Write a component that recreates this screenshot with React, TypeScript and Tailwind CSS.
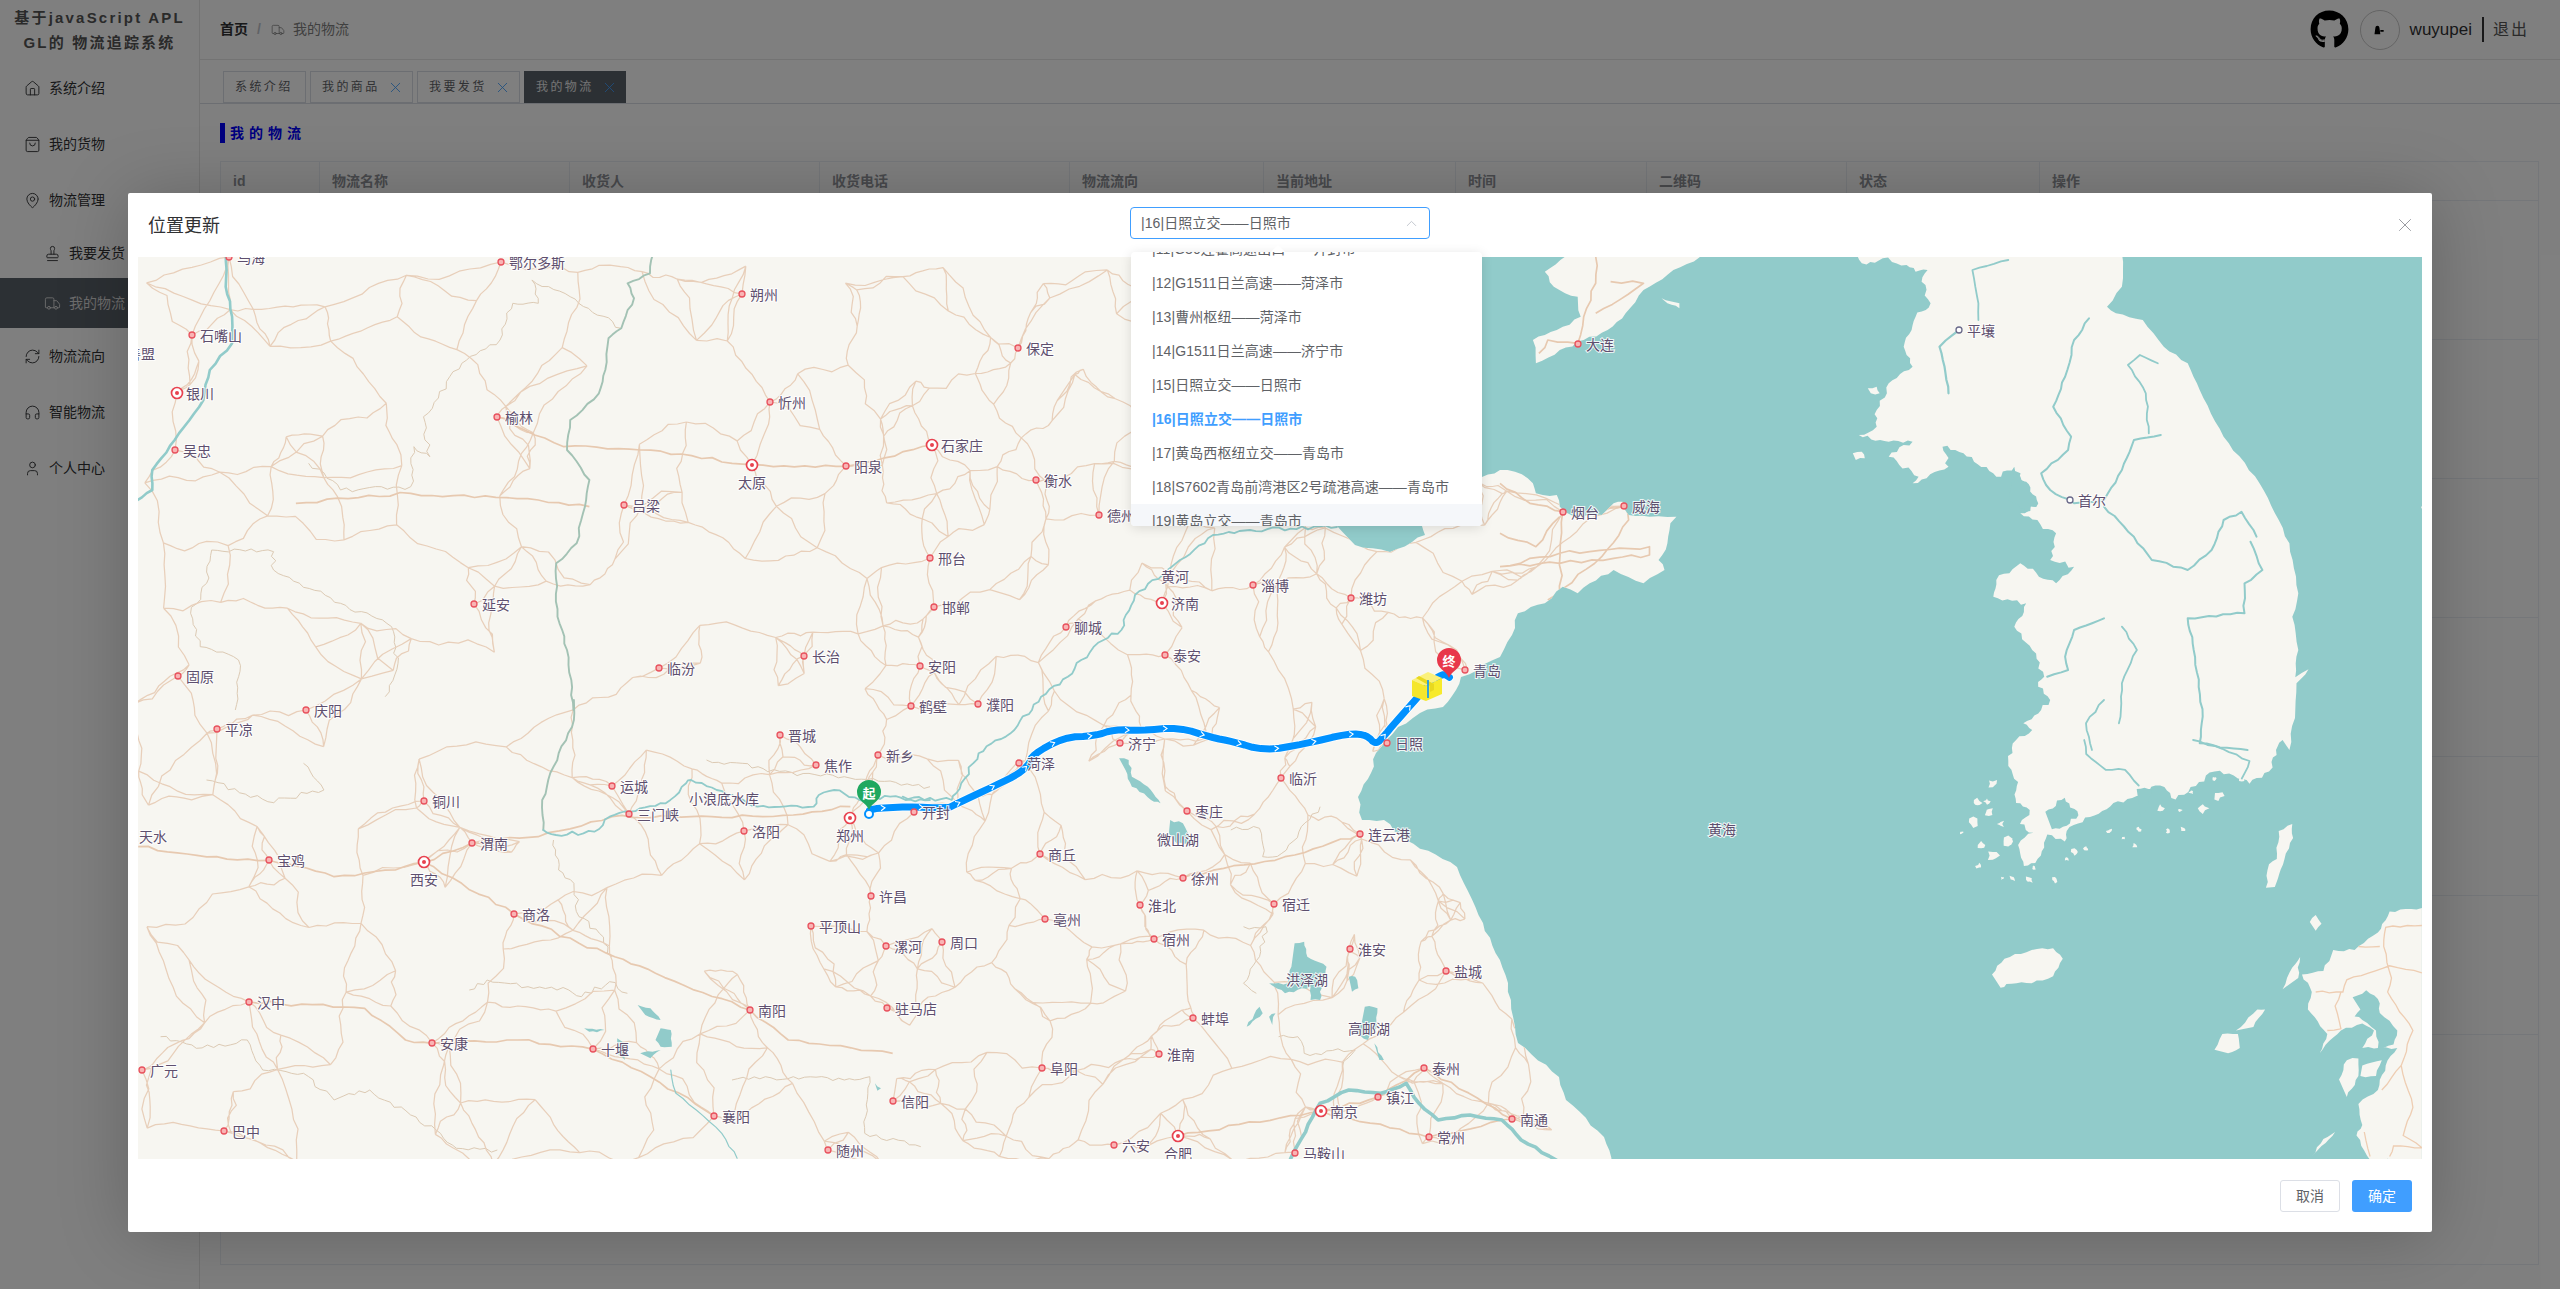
import React from "react";
import { House, ShoppingBag, MapPin, Stamp, Truck, RefreshCw, Headphones, User, X, ChevronUp } from "lucide-react";
import { FaGithub } from "react-icons/fa";

type P = [number, number];
const SANS = '"Liberation Sans","Noto Sans CJK SC",sans-serif';

function rng(seed: number) {
  let a = seed;
  return () => {
    a |= 0;
    a = (a + 0x6d2b79f5) | 0;
    let t = Math.imul(a ^ (a >>> 15), 1 | a);
    t = (t + Math.imul(t ^ (t >>> 7), 61 | t)) ^ t;
    return ((t ^ (t >>> 14)) >>> 0) / 4294967296;
  };
}
const R = rng(20240);

const z4 = (x: number, y: number): P => [800 + x * 0.4464, 620 + y / 3];
const z6 = (x: number, y: number): P => [130 + x * 0.5102, 700 + y / 3];
const z8 = (x: number, y: number): P => [1500 + x * 0.598, 250 + y / 3];
const z9 = (x: number, y: number): P => [1100 + x * 0.638, 750 + y / 3];
const z10 = (x: number, y: number): P => [130 + x * 0.638, 250 + y / 3];
const z12 = (x: number, y: number): P => [1950 + x * 0.389, 740 + y * 0.35];
const pts = (f: (x: number, y: number) => P, a: number[]): P[] => {
  const o: P[] = [];
  for (let i = 0; i + 1 < a.length; i += 2) o.push(f(a[i], a[i + 1]));
  return o;
};
const id = (x: number, y: number): P => [x, y];

function wobble(p: P[], step: number, amp: number): P[] {
  const o: P[] = [];
  for (let i = 0; i < p.length - 1; i++) {
    const [ax, ay] = p[i];
    const [bx, by] = p[i + 1];
    const d = Math.hypot(bx - ax, by - ay) || 1;
    const n = Math.max(1, Math.ceil(d / step));
    const nx = -(by - ay) / d;
    const ny = (bx - ax) / d;
    for (let k = 0; k < n; k++) {
      const t = k / n;
      const off = k === 0 ? 0 : (R() - 0.5) * 2 * amp;
      o.push([ax + (bx - ax) * t + nx * off, ay + (by - ay) * t + ny * off]);
    }
  }
  o.push(p[p.length - 1]);
  return o;
}
function chaikin(p: P[]): P[] {
  const o: P[] = [p[0]];
  for (let i = 0; i < p.length - 1; i++) {
    const a = p[i];
    const b = p[i + 1];
    o.push([a[0] * 0.75 + b[0] * 0.25, a[1] * 0.75 + b[1] * 0.25]);
    o.push([a[0] * 0.25 + b[0] * 0.75, a[1] * 0.25 + b[1] * 0.75]);
  }
  o.push(p[p.length - 1]);
  return o;
}
const toD = (p: P[], close = false) =>
  "M" + p.map((q) => q[0].toFixed(1) + " " + q[1].toFixed(1)).join("L") + (close ? "Z" : "");

const mainRaw: P[] = [
  ...pts(id, [130, 250, 1300, 250, 1300, 450, 1337, 526, 1355, 545, 1390, 552, 1425, 535, 1422, 526, 1440, 490, 1482, 477]),
  ...pts(z8, [0, 660, 25, 665, 55, 700, 60, 730, 95, 735, 100, 770, 125, 800, 170, 795, 190, 760, 205, 755, 215, 795, 250, 800, 295, 800, 285, 820, 280, 880, 265, 930, 275, 960, 240, 1000, 190, 960, 150, 1000, 130, 1030, 105, 1010, 75, 1060, 30, 1090, 20, 1155]),
  ...pts(id, [1500, 657, 1461, 677, 1456, 690, 1443, 707, 1420, 713, 1398, 727, 1376, 753, 1371, 773, 1358, 797, 1362, 820, 1384, 820, 1406, 840, 1457, 867, 1483, 923, 1508, 983, 1518, 1043, 1559, 1077, 1566, 1100, 1604, 1137, 1612, 1165, 130, 1165]),
];
const mainStraight = mainRaw;
const mainLand = toD(wobble(mainRaw, 9, 1.6), true);
const liaodongRaw = pts(z8, [120, 10, 75, 65, 90, 110, 130, 140, 135, 200, 95, 240, 55, 270, 60, 340, 100, 300, 140, 270, 180, 240, 210, 190, 240, 120, 290, 60, 345, 10]);
const liaodong = toD(wobble(liaodongRaw, 8, 1.8), true);
const koreaRaw: P[] = [
  ...pts(z8, [590, 10, 605, 40, 640, 25, 680, 45, 695, 65, 715, 60, 705, 95, 720, 160, 695, 200, 675, 290, 690, 350, 650, 400, 630, 480, 630, 530, 600, 555, 650, 575, 690, 575, 650, 620, 700, 680, 690, 700, 750, 650, 740, 590, 775, 610, 830, 680, 860, 650, 880, 720, 900, 760, 870, 790, 930, 850, 920, 930, 960, 950, 930, 1000, 870, 940, 830, 990, 825, 1040, 880, 1060, 860, 1130, 890, 1200, 910, 1280, 900, 1310, 920, 1350, 875, 1420, 890, 1440]),
  ...pts(z12, [170, 0, 150, 60, 175, 120, 170, 180, 205, 200, 180, 240, 215, 265, 175, 300, 190, 360, 225, 340, 250, 270, 295, 290, 300, 260, 360, 220, 420, 180, 480, 160, 540, 130, 580, 170, 640, 120, 680, 90, 740, 110, 770, 125, 820, 90, 830, 50, 855, 0]),
];
const koreaEast = pts(z8, [1320, 1500, 1330, 1380, 1332, 1300, 1352, 1258, 1330, 1282, 1335, 1200, 1325, 1100, 1335, 1030, 1320, 880, 1270, 700, 1210, 560, 1170, 420, 1150, 340, 1110, 290, 1075, 210, 1030, 190, 1015, 170, 1040, 110, 1040, 10]);
const korea = toD([...wobble(koreaRaw, 5, 2.6), ...wobble(koreaEast, 9, 1.2)], true);
const koreaInlets = [
  pts(z8, [860, 665, 880, 695, 900, 760, 880, 785, 850, 750]),
  pts(z12, [245, 205, 295, 165, 330, 215, 300, 245, 262, 255]),
  pts(z12, [480, 140, 520, 140, 510, 190, 490, 220]),
].map((p) => toD(wobble(p, 4, 2.6), true));
const islandsRaw = [
  pts(z12, [108, 670, 140, 625, 210, 600, 265, 595, 290, 625, 265, 675, 210, 695, 145, 697, 130, 708]),
  pts(z12, [812, 422, 820, 355, 840, 340, 845, 260, 880, 240, 882, 280, 860, 340, 850, 370, 835, 420]),
  pts(z12, [1213, 480, 1130, 490, 1100, 550, 1040, 600, 985, 600, 960, 660, 905, 670, 930, 720, 920, 770, 970, 840, 950, 895, 985, 850, 1005, 830, 1060, 810, 1090, 830, 1060, 880, 1150, 880, 1120, 930, 1100, 1000, 1050, 1040, 1060, 1100, 1045, 1130, 1080, 1200, 1213, 1200]),
  pts(z12, [680, 885, 700, 840, 740, 840, 745, 880, 715, 895]),
  pts(z12, [735, 830, 790, 770, 810, 770, 780, 820]),
  pts(z12, [1000, 970, 1020, 915, 1050, 910, 1050, 960, 1020, 1020]),
  pts(z12, [925, 520, 940, 500, 955, 525, 940, 545]),
  pts(z12, [930, 1190, 960, 1140, 990, 1120, 955, 1160]),
  pts(z12, [855, 712, 880, 650, 900, 620, 895, 680]),
  pts(z12, [1060, 930, 1110, 915, 1095, 960, 1055, 960]),
  pts(z8, [1540, 770, 1555, 760, 1555, 790, 1545, 790]),
  pts(z8, [590, 610, 605, 605, 610, 625, 595, 630]),
  pts(z8, [615, 415, 630, 410, 635, 430, 620, 430]),
  pts(z8, [270, 145, 300, 160, 300, 175, 280, 160]),
];
const islands = islandsRaw.map((p) => toD(wobble(p, 6, 1.3), true));
const kyushuBay = toD(wobble(pts(z12, [1035, 735, 1070, 715, 1100, 740, 1105, 780, 1150, 830, 1140, 870, 1100, 880, 1095, 830, 1060, 800, 1040, 790, 1055, 770]), 7, 1.5), true);
const dots: number[][] = [
  [60, 235, 14], [100, 205, 10], [70, 180, 10], [80, 300, 8], [130, 240, 9], [110, 330, 12], [150, 290, 12], [75, 360, 7],
  [110, 125, 11], [95, 175, 7], [160, 395, 8], [205, 400, 9], [30, 265, 4], [270, 400, 7], [485, 255, 7], [540, 195, 8],
  [650, 195, 11], [690, 160, 11], [590, 200, 6], [475, 300, 6], [600, 255, 7], [560, 260, 5], [680, 110, 5], [750, 110, 7],
  [410, 260, 6], [445, 280, 4], [320, 320, 8], [350, 310, 6], [300, 340, 5], [620, 150, 5], [135, 395, 5], [215, 365, 5],
];
const blobs = dots.map(([x, y, r]) => {
  const n = 8;
  const p: P[] = [];
  for (let i = 0; i < n; i++) {
    const a = (i / n) * Math.PI * 2;
    const rr = r * (0.45 + R() * 1.1);
    p.push(z12(x + Math.cos(a) * rr, y + Math.sin(a) * rr));
  }
  return toD(p, true);
});

type City = { n: string; x: number; y: number; cap?: boolean; below?: boolean; fr?: boolean };
const cities: City[] = ([
  ["乌海", 229, 257], ["鄂尔多斯", 501, 262], ["朔州", 742, 294], ["石嘴山", 192, 335], ["银川", 177, 393, 2], ["吴忠", 175, 450],
  ["榆林", 497, 417], ["忻州", 770, 402], ["保定", 1018, 348], ["石家庄", 932, 445, 2], ["太原", 752, 465, 1], ["阳泉", 846, 466],
  ["衡水", 1036, 480], ["德州", 1099, 515], ["吕梁", 624, 505], ["邢台", 930, 558], ["延安", 474, 604], ["邯郸", 934, 607],
  ["聊城", 1066, 627], ["固原", 178, 676], ["长治", 804, 656], ["临汾", 659, 668], ["安阳", 920, 666], ["鹤壁", 911, 706],
  ["濮阳", 978, 704], ["庆阳", 306, 710], ["平凉", 217, 729], ["晋城", 780, 735], ["新乡", 878, 755], ["焦作", 816, 765],
  ["运城", 612, 786], ["三门峡", 629, 814], ["郑州", 850, 818, 1], ["洛阳", 744, 831], ["铜川", 424, 801], ["渭南", 472, 843],
  ["宝鸡", 269, 860], ["西安", 424, 862, 1], ["商洛", 514, 914], ["许昌", 871, 896], ["平顶山", 811, 926], ["漯河", 886, 946],
  ["汉中", 249, 1002], ["南阳", 750, 1010], ["驻马店", 887, 1008], ["安康", 432, 1043], ["十堰", 593, 1049], ["广元", 142, 1070],
  ["襄阳", 714, 1116], ["信阳", 893, 1101], ["巴中", 224, 1131], ["随州", 828, 1150], ["泰安", 1165, 655], ["青岛", 1465, 670],
  ["菏泽", 1019, 763], ["济宁", 1120, 743], ["开封", 914, 812], ["枣庄", 1187, 811], ["临沂", 1281, 778], ["日照", 1387, 743],
  ["连云港", 1360, 834], ["徐州", 1183, 878], ["淮北", 1140, 905], ["宿迁", 1274, 904], ["宿州", 1154, 939], ["淮安", 1350, 949],
  ["盐城", 1446, 971], ["蚌埠", 1193, 1018], ["淮南", 1159, 1054], ["泰州", 1424, 1068], ["镇江", 1378, 1097], ["南京", 1321, 1111, 2],
  ["南通", 1512, 1119], ["常州", 1429, 1137], ["合肥", 1178, 1136, 1], ["六安", 1114, 1145], ["马鞍山", 1295, 1153], ["商丘", 1040, 854],
  ["亳州", 1045, 919], ["周口", 942, 942], ["阜阳", 1042, 1068], ["济南", 1162, 603, 2], ["淄博", 1253, 585], ["潍坊", 1351, 598],
  ["烟台", 1563, 512], ["威海", 1624, 506], ["大连", 1578, 344],
] as [string, number, number, number?][]).map(([n, x, y, c]) => ({ n, x, y, cap: !!c, below: c === 1 }));
const foreign: City[] = [
  { n: "平壤", x: 1959, y: 330, fr: true },
  { n: "首尔", x: 2070, y: 500, fr: true },
];
const plainLabels: [string, number, number][] = [
  ["小浪底水库", 724, 798], ["天水", 153, 836], ["微山湖", 1178, 839], ["洪泽湖", 1307, 979], ["高邮湖", 1369, 1028], ["黄海", 1722, 829], ["黄河", 1175, 576], ["善盟", 141, 353],
];

function inside(p: P, poly: P[]) {
  let c = false;
  for (let i = 0, j = poly.length - 1; i < poly.length; j = i++) {
    const a = poly[i];
    const b = poly[j];
    if (a[1] > p[1] !== b[1] > p[1] && p[0] < ((b[0] - a[0]) * (p[1] - a[1])) / (b[1] - a[1]) + a[0]) c = !c;
  }
  return c;
}
const nodes: P[] = cities.filter((c) => c.n !== "大连").map((c) => [c.x, c.y]);
for (let x = 120; x < 1560; x += 66) {
  for (let y = 250; y < 1190; y += 66) {
    const east = x > 800;
    for (let k = 0; k < (east ? 2 : 1); k++) {
      const p: P = [x + R() * 66, y + R() * 66];
      if (inside(p, mainStraight)) nodes.push(p);
    }
  }
}
function road(a: P, b: P, bend: number) {
  const d = Math.hypot(b[0] - a[0], b[1] - a[1]);
  const s = (R() - 0.5) * d * bend;
  const t = (R() - 0.5) * d * bend;
  const nx = -(b[1] - a[1]) / d;
  const ny = (b[0] - a[0]) / d;
  const m1: P = [a[0] + (b[0] - a[0]) / 3 + nx * s, a[1] + (b[1] - a[1]) / 3 + ny * s];
  const m2: P = [a[0] + ((b[0] - a[0]) * 2) / 3 + nx * t, a[1] + ((b[1] - a[1]) * 2) / 3 + ny * t];
  return wobble([a, m1, m2, b], 11, 1.6);
}
const seen = new Set<string>();
let roadsD = "";
nodes.forEach((p, i) => {
  const order = nodes
    .map((q, j) => [Math.hypot(q[0] - p[0], q[1] - p[1]), j] as [number, number])
    .sort((a, b) => a[0] - b[0])
    .slice(1, 4);
  order.forEach(([d, j]) => {
    const key = i < j ? i + "-" + j : j + "-" + i;
    if (seen.has(key) || d > 150) return;
    seen.add(key);
    roadsD += toD(road(p, nodes[j], 0.22));
  });
});
const manual = [
  pts(z8, [160, 20, 160, 100, 140, 200, 130, 281]),
  pts(z8, [185, 95, 240, 100, 160, 190]),
  pts(z8, [130, 280, 80, 270, 65, 310]),
  pts(z8, [0, 700, 50, 760, 105, 785, 210, 770, 215, 810, 170, 920, 80, 1050]),
  pts(z8, [0, 950, 100, 910, 250, 890, 250, 915, 190, 925, 100, 940, 0, 950]),
  pts(z8, [105, 785, 100, 1040]),
  pts(z8, [0, 850, 60, 890, 100, 800]),
  pts(z6, [16, 440, 170, 470, 272, 481, 400, 530, 520, 510, 576, 487, 671, 428, 800, 410, 945, 350, 1100, 350, 1300, 345, 1412, 320]),
  pts(z6, [234, 906, 460, 925, 540, 1020, 592, 1030, 760, 1020, 908, 1048, 1020, 1130, 1144, 1247]),
  pts(z6, [576, 487, 650, 550, 752, 641, 880, 730, 950, 770, 1030, 820, 1216, 931, 1290, 1020, 1495, 1060]),
  pts(z10, [575, 500, 680, 590, 800, 600, 976, 644, 1123, 649, 1257, 585]),
  pts(z10, [260, 760, 440, 730, 640, 750, 720, 770]),
  pts(z9, [130, 383, 290, 320, 407, 253]),
  pts(z9, [347, 1083, 436, 1041, 508, 954, 646, 1107]),
  pts(z9, [122, 1158, 347, 1083, 515, 1162, 646, 1107]),
];
const manualD = manual.map((m) => toD(wobble(m, 11, 1.8))).join("");
const kyushuRoads = [
  pts(z12, [1213, 530, 1120, 535, 1115, 590, 1135, 680, 1125, 720, 1190, 830, 1160, 930, 1190, 1050, 1165, 1130, 1213, 1165]),
  pts(z12, [1213, 665, 1130, 645, 1020, 685, 1010, 720, 940, 720]),
  pts(z12, [1005, 720, 990, 760, 1005, 825, 970, 830]),
  pts(z12, [1105, 590, 1050, 590]),
  pts(z12, [1160, 930, 1110, 1000]),
  pts(z12, [1065, 1120, 1080, 1190]),
  pts(z12, [1130, 1190, 1140, 1160, 1213, 1165]),
].map((m) => toD(wobble(m, 9, 1))).join("");
const borders = [
  pts(z10, [128, 900, 225, 905, 225, 960, 330, 1060, 410, 1130, 420, 1240, 400, 1340]),
  pts(z10, [280, 640, 330, 720, 440, 710, 445, 590, 470, 620, 460, 500, 520, 340, 580, 270, 600, 160, 640, 160, 630, 90, 690, 140, 770, 235]),
  pts(z10, [128, 900, 120, 1000, 95, 1090, 110, 1190, 170, 1230, 165, 1380]),
  pts(z6, [665, 870, 700, 840, 780, 860, 860, 870, 885, 890, 940, 845, 975, 880]),
  pts(z6, [60, 1010, 130, 1045, 230, 1020, 260, 1110, 340, 1120, 400, 1200, 470, 1170, 600, 1290, 640, 1345, 720, 1350]),
  pts(z6, [150, 240, 270, 305, 380, 270, 340, 190]),
  pts(z6, [945, 770, 920, 700, 880, 650, 870, 550, 840, 510, 830, 420]),
  pts(z6, [1130, 180, 1200, 190, 1250, 215, 1400, 230, 1568, 260]),
  pts(z6, [1180, 1140, 1300, 1130, 1400, 1140, 1450, 1130, 1440, 1300, 1550, 1340]),
  pts(z9, [205, 240, 250, 235, 255, 320, 285, 310, 345, 170]),
  pts(z9, [280, 860, 310, 860, 320, 910, 400, 900, 380, 950]),
  pts(z9, [225, 530, 260, 530, 250, 620, 225, 700, 245, 730]),
].map((m) => toD(wobble(m, 6, 2.6))).join("");

const rivers: { p: P[]; w: number; c: string; a: number; st: number }[] = [
  { p: pts(z10, [150, 10, 150, 110, 160, 200, 160, 280, 125, 360, 115, 450, 70, 570, 35, 660, 35, 720, 10, 752]), w: 2.6, c: "#91cbca", a: 1.2, st: 9 },
  { p: pts(z10, [820, 10, 815, 70, 780, 100, 790, 145, 770, 235, 750, 265, 745, 360, 735, 430, 690, 510, 685, 600, 720, 690, 710, 790, 700, 880, 668, 940, 670, 1100, 685, 1200, 695, 1380]), w: 1.9, c: "#a3c2b4", a: 1.3, st: 8 },
  { p: pts(z6, [870, 0, 870, 60, 830, 200, 808, 300, 810, 390]), w: 1.9, c: "#a3c2b4", a: 1.2, st: 8 },
  { p: pts(z6, [810, 390, 835, 405, 910, 395, 940, 350, 980, 335, 1050, 310, 1090, 250, 1100, 240, 1150, 270, 1230, 320, 1340, 320, 1350, 285, 1380, 270, 1430, 300, 1490, 290, 1520, 300, 1568, 300]), w: 1.8, c: "#91cbca", a: 2, st: 6 },
  { p: [...pts(z4, [230, 530, 340, 540, 350, 520, 400, 400, 480, 330, 540, 230, 600, 170, 630, 120, 680, 60, 720, 30, 725, 0]), ...pts(id, [1135, 595, 1180, 560, 1213, 535, 1250, 530, 1337, 527])], w: 1.8, c: "#91cbca", a: 2, st: 6 },
  { p: pts(z9, [298, 1230, 345, 1060, 390, 1020, 440, 1030, 480, 1000, 500, 1060, 530, 1110, 580, 1095, 630, 1110, 660, 1170, 715, 1230]), w: 3.6, c: "#91cbca", a: 1, st: 9 },
  { p: pts(z6, [1060, 1110, 1070, 1180, 1110, 1230, 1160, 1300, 1190, 1375]), w: 1.2, c: "#91cbca", a: 1, st: 9 },
  { p: pts(z8, [768, 240, 735, 290, 745, 370, 750, 430]), w: 2.2, c: "#91cbca", a: 1, st: 9 },
  { p: pts(z8, [850, 30, 790, 60, 800, 160, 800, 210]), w: 1.8, c: "#91cbca", a: 1, st: 9 },
  { p: pts(z8, [985, 205, 960, 270, 945, 380, 925, 470, 955, 560, 950, 600, 905, 670, 920, 720, 960, 760, 1010, 750, 1040, 660, 1060, 570, 1105, 555]), w: 2, c: "#91cbca", a: 1.2, st: 8 },
  { p: pts(z8, [1100, 340, 1070, 315, 1050, 345, 1080, 430, 1085, 550]), w: 1.8, c: "#91cbca", a: 1.2, st: 8 },
  { p: pts(z8, [1010, 770, 1060, 860, 1090, 930, 1150, 960, 1190, 900, 1210, 810, 1240, 785, 1265, 860]), w: 2, c: "#91cbca", a: 1.2, st: 8 },
  { p: pts(z8, [1255, 875, 1275, 960, 1245, 1000, 1245, 1090, 1150, 1105, 1160, 1200, 1175, 1400, 1170, 1480, 1250, 1500]), w: 2, c: "#91cbca", a: 1.2, st: 8 },
  { p: pts(z8, [1010, 1105, 960, 1140, 945, 1220, 950, 1260, 915, 1280]), w: 2, c: "#91cbca", a: 1.2, st: 8 },
  { p: pts(z8, [1040, 1130, 1065, 1200, 1040, 1300, 1035, 1420]), w: 1.8, c: "#91cbca", a: 1.2, st: 8 },
  { p: pts(z8, [1010, 1350, 980, 1420, 990, 1500]), w: 1.8, c: "#91cbca", a: 1.2, st: 8 },
  { p: pts(z12, [345, 0, 350, 40, 400, 85, 450, 85, 485, 130]), w: 1.8, c: "#91cbca", a: 1, st: 8 },
  { p: pts(z12, [625, 0, 700, 25, 770, 60, 750, 110]), w: 1.8, c: "#91cbca", a: 1, st: 8 },
];
const riversS = rivers.map((r) => ({ d: toD(wobble(r.p, r.st, r.a)), w: r.w, c: r.c }));
const lakes = [
  pts(z9, [30, 25, 45, 30, 50, 80, 75, 110, 95, 160, 80, 150, 50, 110, 40, 60]),
  pts(z9, [110, 210, 130, 220, 145, 280, 120, 280, 108, 250]),
  pts(z9, [305, 580, 320, 575, 325, 620, 355, 650, 350, 690, 345, 750, 330, 750, 330, 710, 290, 730, 265, 700, 295, 700, 300, 650]),
  pts(z9, [415, 770, 435, 775, 435, 830, 420, 870, 395, 850, 410, 820]),
  pts(z9, [430, 880, 445, 930, 438, 930]),
  pts(z9, [390, 680, 400, 680, 405, 715, 395, 725]),
  pts(z9, [230, 830, 250, 770, 255, 790, 235, 825]),
  pts(z9, [265, 800, 275, 790, 270, 825]),
  pts(z6, [995, 915, 1020, 925, 1040, 960, 1010, 945]),
  pts(z6, [1040, 985, 1060, 990, 1062, 1040, 1040, 1040, 1030, 1020]),
  pts(z6, [1000, 1060, 1040, 1050, 1020, 1075]),
  pts(z6, [955, 1015, 975, 1030, 970, 1080, 955, 1060]),
  pts(z6, [890, 985, 930, 990, 900, 995]),
  pts(z6, [1460, 1150, 1472, 1165, 1465, 1172]),
].map((p) => toD(wobble(p, 5, 1.4), true));

const routePts: P[] = wobble(
  chaikin(
    chaikin(
      pts(z4, [155, 582, 155, 566, 240, 560, 330, 565, 345, 555, 440, 495, 490, 462, 515, 430, 520, 405, 590, 352, 660, 348, 705, 328, 760, 332, 850, 322, 920, 352, 970, 365, 1040, 392, 1130, 372, 1230, 340, 1270, 345, 1290, 375, 1310, 345, 1345, 290, 1385, 230, 1410, 190, 1440, 160, 1455, 172]),
    ),
  ),
  14,
  0.6,
);
const routeD = toD(routePts);
const chevrons: string[] = [];
{
  let acc = 18;
  for (let i = 0; i < routePts.length - 1; i++) {
    const a = routePts[i];
    const b = routePts[i + 1];
    const d = Math.hypot(b[0] - a[0], b[1] - a[1]) || 1;
    const ux = (b[0] - a[0]) / d;
    const uy = (b[1] - a[1]) / d;
    let s = acc;
    while (s < d) {
      const cx = a[0] + ux * s;
      const cy = a[1] + uy * s;
      const l: P = [cx - ux * 2.5 - uy * 2.8, cy - uy * 2.5 + ux * 2.8];
      const rr: P = [cx - ux * 2.5 + uy * 2.8, cy - uy * 2.5 - ux * 2.8];
      chevrons.push(toD([l, [cx + ux * 1.5, cy + uy * 1.5], rr]));
      s += 38;
    }
    acc = s - d;
  }
}

function ChinaMap() {
  const sea = "#91cbca";
  const land = "#f7f6f1";
  return (
    <svg viewBox="138 257 2284 902" className="block h-[902px] w-[2284px]" xmlns="http://www.w3.org/2000/svg">
      <defs>
        <clipPath id="chinaLand">
          <path d={mainLand} />
          <path d={liaodong} />
        </clipPath>
      </defs>
      <rect x="138" y="257" width="2284" height="902" fill={sea} />
      <path d={mainLand} fill={land} />
      <path d={liaodong} fill={land} />
      <path d={korea} fill={land} />
      {koreaInlets.map((d, i) => (
        <path key={i} d={d} fill={sea} />
      ))}
      {islands.map((d, i) => (
        <path key={i} d={d} fill={land} />
      ))}
      {blobs.map((d, i) => (
        <path key={i} d={d} fill={land} />
      ))}
      <path d={kyushuBay} fill={sea} />
      <g clipPath="url(#chinaLand)" fill="none" strokeLinejoin="round">
        <path d={borders} stroke="#dccab4" strokeWidth="1" />
        <path d={roadsD} stroke="#e8cfba" strokeWidth="1.25" />
        <path d={manualD} stroke="#e7c9b0" strokeWidth="1.7" />
      </g>
      <path d={kyushuRoads} fill="none" stroke="#eecdb2" strokeWidth="1.3" />
      <g fill="none" strokeLinejoin="round" strokeLinecap="round">
        {riversS.map((r, i) => (
          <path key={i} d={r.d} stroke={r.c} strokeWidth={r.w} />
        ))}
      </g>
      {lakes.map((d, i) => (
        <path key={i} d={d} fill={sea} />
      ))}
      <path d={routeD} fill="none" stroke="#ffffff" strokeOpacity="0.75" strokeWidth="9" strokeLinejoin="round" strokeLinecap="round" />
      <path d={routeD} fill="none" stroke="#0091ff" strokeWidth="7" strokeLinejoin="round" strokeLinecap="round" />
      <g fill="none" stroke="#ffffff" strokeWidth="1.1">
        {chevrons.map((d, i) => (
          <path key={i} d={d} />
        ))}
      </g>
      {[...cities, ...foreign].map((c) => (
        <g key={c.n}>
          {c.cap ? (
            <>
              <circle cx={c.x} cy={c.y} r="5.5" fill="#fff" stroke="#e8424f" strokeWidth="1.7" />
              <circle cx={c.x} cy={c.y} r="2" fill="#e8424f" />
            </>
          ) : (
            <circle cx={c.x} cy={c.y} r="3" fill={c.fr ? "#fff" : "#f9b4b4"} stroke={c.fr ? "#6a6a8a" : "#e8525e"} strokeWidth="1.3" />
          )}
          <text
            x={c.below ? c.x : c.x + (c.cap ? 9 : 8)}
            y={c.below ? c.y + 17 : c.y}
            textAnchor={c.below ? "middle" : "start"}
            dominantBaseline="central"
            fontSize="14"
            fontFamily='"Noto Sans CJK SC",sans-serif'
            fill="#5e4f6e"
            stroke="#ffffff"
            strokeOpacity="0.85"
            strokeWidth="2"
            paintOrder="stroke"
          >
            {c.n}
          </text>
        </g>
      ))}
      {plainLabels.map(([n, x, y]) => (
        <text
          key={n}
          x={x}
          y={y}
          textAnchor="middle"
          dominantBaseline="central"
          fontSize="14"
          fontFamily='"Noto Sans CJK SC",sans-serif'
          fill="#5e4f6e"
          stroke="#ffffff"
          strokeOpacity="0.85"
          strokeWidth="2"
          paintOrder="stroke"
        >
          {n}
        </text>
      ))}
      <circle cx="869" cy="814" r="4" fill="#fff" stroke="#0091ff" strokeWidth="2" />
      <path d="M869 810 C866 802 857 801 857 792 A12 12 0 1 1 881 792 C881 801 872 802 869 810Z" fill="#1fa85f" />
      <text x="869" y="792" textAnchor="middle" dominantBaseline="central" fontSize="13" fontWeight="700" fill="#fff" fontFamily='"Noto Sans CJK SC",sans-serif'>起</text>
      <path d="M1449 678 C1446 670 1437 669 1437 660 A12 12 0 1 1 1461 660 C1461 669 1452 670 1449 678Z" fill="#e8374a" />
      <text x="1449" y="660" textAnchor="middle" dominantBaseline="central" fontSize="13" fontWeight="700" fill="#fff" fontFamily='"Noto Sans CJK SC",sans-serif'>终</text>
      <path d="M1412 680 L1428 672 L1442 678 L1426 686Z" fill="#fbf17a" />
      <path d="M1412 680 L1426 686 L1426 701 L1412 696Z" fill="#f5e62b" />
      <path d="M1426 686 L1442 678 L1442 694 L1426 701Z" fill="#f7ea2c" />
      <path d="M1419 676 L1434 684 L1434 690 L1430 692 L1430 686 L1416 678Z" fill="#e8d820" />
      <path d="M1428 680 L1428 698" stroke="#0091ff" strokeWidth="1.6" />
    </svg>
  );
}

const menu: { t: string; Icon: any; sub?: boolean; active?: boolean }[] = [
  { t: "系统介绍", Icon: House },
  { t: "我的货物", Icon: ShoppingBag },
  { t: "物流管理", Icon: MapPin },
  { t: "我要发货", Icon: Stamp, sub: true },
  { t: "我的物流", Icon: Truck, sub: true, active: true },
  { t: "物流流向", Icon: RefreshCw },
  { t: "智能物流", Icon: Headphones },
  { t: "个人中心", Icon: User },
];
const tabs = [
  { t: "系统介绍", w: "w-[83px]" },
  { t: "我的商品", w: "w-[103px]", x: true },
  { t: "我要发货", w: "w-[103px]", x: true },
  { t: "我的物流", w: "w-[102px]", x: true, on: true },
];
const cols = [
  { t: "id", w: "w-[99px]" },
  { t: "物流名称", w: "w-[250px]" },
  { t: "收货人", w: "w-[250px]" },
  { t: "收货电话", w: "w-[250px]" },
  { t: "物流流向", w: "w-[194px]" },
  { t: "当前地址", w: "w-[192px]" },
  { t: "时间", w: "w-[191px]" },
  { t: "二维码", w: "w-[200px]" },
  { t: "状态", w: "w-[193px]" },
  { t: "操作", w: "flex-1" },
];
const options = [
  "|11|G30连霍高速出口——开封市",
  "|12|G1511日兰高速——菏泽市",
  "|13|曹州枢纽——菏泽市",
  "|14|G1511日兰高速——济宁市",
  "|15|日照立交——日照市",
  "|16|日照立交——日照市",
  "|17|黄岛西枢纽立交——青岛市",
  "|18|S7602青岛前湾港区2号疏港高速——青岛市",
  "|19|黄岛立交——青岛市",
];

export default function App() {
  return (
    <div className="relative flex h-[1289px] w-full overflow-hidden bg-white text-[14px] text-[#606266]" style={{ fontFamily: SANS }}>
      <aside className="w-[200px] shrink-0 border-r border-[#e6e6e6]">
        <div className="flex h-[60px] items-center justify-center text-center text-[15px] font-bold leading-[25px] tracking-[2.2px] text-[#555]">
          <div className="w-[190px] break-all">基于javaScript APL<br />GL的 物流追踪系统</div>
        </div>
        {menu.map((m) => (
          <div
            key={m.t + (m.sub ? "s" : "")}
            className={
              "flex items-center gap-[8px] " +
              (m.sub ? "h-[50px] pl-[44px] " : "h-[56px] pl-[24px] ") +
              (m.active ? "bg-[#596069] text-[#d8d8d8]" : "text-[#303133]")
            }
          >
            <m.Icon size={17} strokeWidth={1.3} />
            <span>{m.t}</span>
          </div>
        ))}
      </aside>
      <main className="min-w-0 flex-1">
        <header className="flex h-[60px] items-center justify-between border-b border-[#e6e6e6] pl-[20px] pr-[31px]">
          <div className="flex items-center">
            <span className="font-bold text-[#303133]">首页</span>
            <span className="mx-[9px] font-bold text-[#c0c4cc]">/</span>
            <Truck size={14} strokeWidth={1.3} className="ml-[1px] mr-[8px] text-[#808080]" />
            <span className="text-[#808080]">我的物流</span>
          </div>
          <div className="flex items-center text-[16px]">
            <FaGithub size={39} className="text-black" />
            <div className="ml-[11px] flex h-[40px] w-[40px] items-center justify-center rounded-full border border-[#c8c8c8]">
              <svg viewBox="0 0 14 12" className="h-[10px] w-[13px]">
                <path d="M1 11 L2 4 C2 0 7 0 7 4 L8 11Z M8 6 H12 V8 H8Z" fill="#000" />
              </svg>
            </div>
            <span className="ml-[10px] text-[17px] text-[#303133]">wuyupei</span>
            <span className="ml-[10px] h-[25px] w-[2px] bg-[#303133]" />
            <span className="ml-[9px] tracking-[2px] text-[#555]">退出</span>
          </div>
        </header>
        <div className="flex h-[44px] items-end gap-[4px] border-b border-[#d8dce5] pl-[23px]">
          {tabs.map((t) => (
            <div
              key={t.t}
              className={
                "flex h-[32px] items-center border pl-[11px] text-[12px] tracking-[2.4px] " +
                t.w +
                (t.on ? " border-[#596069] bg-[#596069] text-[#e8e8e8]" : " border-[#d8dce5] text-[#606266]")
              }
            >
              <span>{t.t}</span>
              {t.x && <X size={17} strokeWidth={1.2} className="ml-[7px] text-[#409eff]" />}
            </div>
          ))}
        </div>
        <div className="pl-[20px] pr-[21px] pt-[19px]">
          <div className="flex h-[20px] items-center border-l-[5px] border-[#0000ff] pl-[5px] text-[14px] font-bold tracking-[5px] text-[#0000ff]">
            我的物流
          </div>
          <div className="mt-[18px] flex h-[1104px] flex-col border border-[#ebeef5]">
            <div className="flex h-[39px] shrink-0 border-b border-[#ebeef5] font-bold text-[#909399]">
              {cols.map((c) => (
                <div key={c.t} className={"flex items-center border-r border-[#ebeef5] pl-[12px] last:border-r-0 " + c.w}>
                  {c.t}
                </div>
              ))}
            </div>
            {[0, 1, 2, 3, 4, 5].map((i) => (
              <div key={i} className="h-[139px] shrink-0 border-b border-[#ebeef5]" />
            ))}
          </div>
        </div>
      </main>
      <div className="absolute inset-0 flex justify-center bg-black/50 pt-[193px]">
        <div className="relative h-[1039px] w-[2304px] rounded-[2px] bg-white shadow-[0_4px_70px_rgba(0,0,0,0.22)]">
          <div className="relative flex h-[64px] items-center pl-[20px] pt-[2px]">
            <span className="text-[18px] text-[#303133]">位置更新</span>
            <X size={22} strokeWidth={1} className="absolute right-[16px] top-[21px] text-[#909399]" />
          </div>
          <div className="px-[10px]">
            <ChinaMap />
          </div>
          <div className="flex h-[73px] items-start justify-end gap-[12px] pr-[20px] pt-[21px] text-[14px]">
            <div className="flex h-[32px] w-[60px] items-center justify-center rounded-[3px] border border-[#dcdfe6] text-[#606266]">取消</div>
            <div className="flex h-[32px] w-[60px] items-center justify-center rounded-[3px] bg-[#409eff] text-white">确定</div>
          </div>
          <div className="absolute left-[1002px] top-[14px] flex h-[32px] w-[300px] items-center justify-between rounded-[4px] border border-[#409eff] pl-[10px] pr-[9px] tracking-[0.08px] text-[#606266]">
            <span>|16|日照立交——日照市</span>
            <ChevronUp size={17} strokeWidth={1.3} className="text-[#c0c4cc]" />
          </div>
          <div className="absolute left-[1003px] top-[59px] h-[274px] w-[351px] rounded-[4px] bg-white shadow-[0_2px_12px_rgba(0,0,0,0.12)]">
            <div className="absolute left-[142px] top-[-5px] h-[10px] w-[10px] rotate-45 bg-white" />
            <div className="relative h-full overflow-hidden rounded-[4px]">
              <div className="mt-[-20px]">
                {options.map((o, i) => (
                  <div
                    key={o}
                    className={
                      "flex h-[34px] items-center pl-[21px] tracking-[0.08px] " +
                      (i === 5 ? "font-bold text-[#409eff] " : "text-[#606266] ") +
                      (i === 8 ? "bg-[#f5f7fa]" : "")
                    }
                  >
                    {o}
                  </div>
                ))}
              </div>
            </div>
          </div>
        </div>
      </div>
    </div>
  );
}
